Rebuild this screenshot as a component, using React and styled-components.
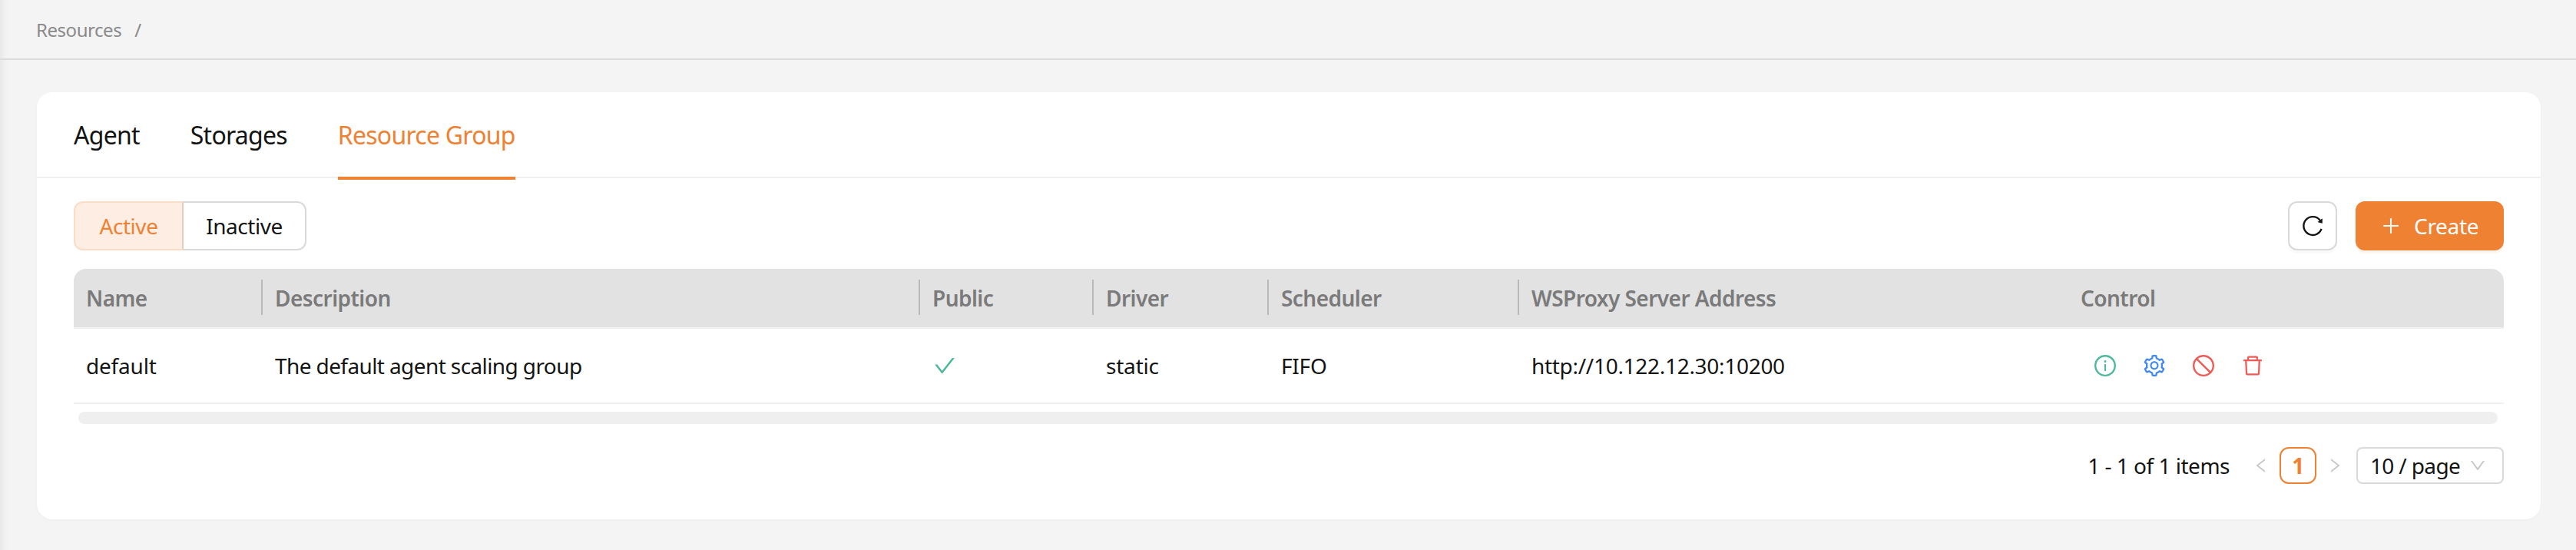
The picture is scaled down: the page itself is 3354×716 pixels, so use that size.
import React from 'react';
import styled, { createGlobalStyle } from 'styled-components';
import {
  AiOutlineCheck, AiOutlineDelete, AiOutlineDown, AiOutlineInfoCircle, AiOutlineLeft,
  AiOutlinePlus, AiOutlineReload, AiOutlineRight, AiOutlineSetting, AiOutlineStop,
} from 'react-icons/ai';

const FONT = '"Noto Sans", "Open Sans", sans-serif';
const ORANGE = '#EF8133';
const INK = '#141414';
const TEMPLATE = '246px 856px 226px 228px 326px 715px 1fr';

const Global = createGlobalStyle`
  html, body { margin: 0; padding: 0; background: #f4f4f4; }
  body { font-family: ${FONT}; color: ${INK}; }
  * { box-sizing: border-box; }
`;

const Page = styled.div`
  width: 3354px;
  height: 716px;
  overflow: hidden;
  background: #f4f4f4;
  box-shadow: inset 14px 0 14px -14px rgba(0, 0, 0, 0.1);
`;
const TopBar = styled.header`
  height: 78px;
  padding-left: 47px;
  display: flex;
  align-items: center;
  gap: 17px;
  border-bottom: 2px solid #dcdcdc;
  font-size: 24px;
  letter-spacing: -0.45px;
  color: #8a8a8a;
`;
const Main = styled.main`
  padding: 42px 46px 0 48px;
`;
const Card = styled.section`
  height: 556px;
  background: #fff;
  border-radius: 20px;
  box-shadow: 0 1px 3px rgba(0, 0, 0, 0.03);
`;
const Tabs = styled.nav`
  height: 112px;
  padding-left: 48px;
  display: flex;
  gap: 66px;
  border-bottom: 2px solid #f0f0f0;
`;
const Tab = styled.div`
  position: relative;
  display: flex;
  align-items: center;
  height: 112px;
  padding-bottom: 2px;
  font-size: 32px;
  letter-spacing: -0.75px;
  color: ${p => (p.$active ? ORANGE : INK)};
  &::after {
    content: ${p => (p.$active ? '""' : 'none')};
    position: absolute;
    left: 0;
    right: 0;
    bottom: -2px;
    height: 4px;
    background: ${ORANGE};
  }
`;
const Body = styled.div`
  padding: 30px 48px 0;
`;
const Toolbar = styled.div`
  display: flex;
  align-items: center;
  justify-content: space-between;
  margin-bottom: 24px;
`;
const Segments = styled.div`
  display: flex;
  height: 64px;
`;
const Segment = styled.div`
  display: flex;
  align-items: center;
  justify-content: center;
  width: ${p => p.$width}px;
  font-size: 28px;
  letter-spacing: -0.45px;
  color: ${p => (p.$active ? ORANGE : INK)};
  background: ${p => (p.$active ? '#FDEDE2' : '#fff')};
  border: 2px solid ${p => (p.$active ? '#FBDCC6' : '#d9d9d9')};
  border-left-width: ${p => (p.$active ? 2 : 0)}px;
  border-right-color: ${p => (p.$active ? '#E3CDBD' : '#d9d9d9')};
  border-radius: ${p => (p.$active ? '12px 0 0 12px' : '0 12px 12px 0')};
`;
const Actions = styled.div`
  display: flex;
  gap: 24px;
`;
const IconButton = styled.button`
  width: 64px;
  height: 64px;
  padding: 0;
  display: flex;
  align-items: center;
  justify-content: center;
  background: #fff;
  color: ${INK};
  font-size: 32px;
  border: 2px solid #d9d9d9;
  border-radius: 12px;
  box-shadow: 0 4px 0 rgba(0, 0, 0, 0.02);
`;
const PrimaryButton = styled.button`
  width: 193px;
  height: 64px;
  padding: 0 0 0 32px;
  display: flex;
  align-items: center;
  gap: 16px;
  background: ${ORANGE};
  color: #fff;
  font-family: ${FONT};
  font-size: 28px;
  letter-spacing: -0.3px;
  border: 0;
  border-radius: 12px;
  box-shadow: 0 4px 0 rgba(239, 129, 51, 0.08);
`;
const HeadRow = styled.div`
  display: grid;
  grid-template-columns: ${TEMPLATE};
  height: 78px;
  align-items: center;
  background: #e2e2e2;
  border-bottom: 2px solid #f0f0f0;
  border-radius: 16px 16px 0 0;
`;
const HeadCell = styled.div`
  position: relative;
  padding-left: 16px;
  font-size: 28px;
  font-weight: 600;
  letter-spacing: -0.55px;
  color: #7a7a7a;
  &::after {
    content: ${p => (p.$last ? 'none' : '""')};
    position: absolute;
    right: 0;
    top: 50%;
    width: 2px;
    height: 46px;
    margin-top: -24px;
    background: #b9b9b9;
  }
`;
const DataRow = styled.div`
  display: grid;
  grid-template-columns: ${TEMPLATE};
  height: 98px;
  align-items: center;
  border-bottom: 2px solid #f0f0f0;
`;
const DataCell = styled.div`
  display: flex;
  align-items: center;
  padding-left: 16px;
  font-size: 28px;
  letter-spacing: ${p => p.$spacing ?? -0.2}px;
  color: ${INK};
`;
const ControlButton = styled.span`
  width: 64px;
  display: flex;
  justify-content: center;
  font-size: 32px;
  color: ${p => p.$color};
`;
const CheckMark = styled.span`
  display: flex;
  font-size: 32px;
  color: #4DB89A;
`;
const Scrollbar = styled.div`
  height: 16px;
  margin: 10px 8px 0 6px;
  background: #efefef;
  border-radius: 8px;
`;
const Pager = styled.div`
  display: flex;
  align-items: center;
  justify-content: flex-end;
  height: 48px;
  margin-top: 30px;
  font-size: 28px;
  letter-spacing: -0.5px;
`;
const Total = styled.span`
  margin-right: 17px;
`;
const PagerArrow = styled.span`
  width: 48px;
  display: flex;
  justify-content: center;
  font-size: 24px;
  color: #c6c6c6;
`;
const PageBox = styled.span`
  width: 48px;
  height: 48px;
  display: flex;
  align-items: center;
  justify-content: center;
  font-weight: 700;
  color: ${ORANGE};
  border: 2px solid ${ORANGE};
  border-radius: 12px;
`;
const PageSize = styled.div`
  width: 192px;
  height: 48px;
  margin-left: 4px;
  padding: 0 20px 0 16px;
  display: flex;
  align-items: center;
  justify-content: space-between;
  border: 2px solid #d9d9d9;
  border-radius: 8px;
  letter-spacing: -0.65px;
  & > svg { font-size: 24px; color: #c6c6c6; }
`;

const headers = ['Name', 'Description', 'Public', 'Driver', 'Scheduler', 'WSProxy Server Address', 'Control'];
const controls = [
  ['info', AiOutlineInfoCircle, '#4DB89A'],
  ['settings', AiOutlineSetting, '#3B86F2'],
  ['disable', AiOutlineStop, '#EE5A55'],
  ['delete', AiOutlineDelete, '#EE5A55'],
];

export default function App() {
  return (
    <Page>
      <Global />
      <TopBar>
        <span>Resources</span>
        <span>/</span>
      </TopBar>
      <Main>
        <Card>
          <Tabs>
            <Tab>Agent</Tab>
            <Tab>Storages</Tab>
            <Tab $active>Resource Group</Tab>
          </Tabs>
          <Body>
            <Toolbar>
              <Segments>
                <Segment $active $width={143}>Active</Segment>
                <Segment $width={160}>Inactive</Segment>
              </Segments>
              <Actions>
                <IconButton aria-label="Refresh"><AiOutlineReload /></IconButton>
                <PrimaryButton><AiOutlinePlus />Create</PrimaryButton>
              </Actions>
            </Toolbar>
            <HeadRow>
              {headers.map((h, i) => (
                <HeadCell key={h} $last={i >= headers.length - 2}>{h}</HeadCell>
              ))}
            </HeadRow>
            <DataRow>
              <DataCell>default</DataCell>
              <DataCell $spacing={-0.6}>The default agent scaling group</DataCell>
              <DataCell><CheckMark><AiOutlineCheck /></CheckMark></DataCell>
              <DataCell>static</DataCell>
              <DataCell>FIFO</DataCell>
              <DataCell $spacing={-0.3}>http://10.122.12.30:10200</DataCell>
              <DataCell>
                {controls.map(([key, Icon, color]) => (
                  <ControlButton key={key} $color={color}><Icon /></ControlButton>
                ))}
              </DataCell>
            </DataRow>
            <Scrollbar />
            <Pager>
              <Total>1 - 1 of 1 items</Total>
              <PagerArrow><AiOutlineLeft /></PagerArrow>
              <PageBox>1</PageBox>
              <PagerArrow><AiOutlineRight /></PagerArrow>
              <PageSize>10 / page<AiOutlineDown /></PageSize>
            </Pager>
          </Body>
        </Card>
      </Main>
    </Page>
  );
}
